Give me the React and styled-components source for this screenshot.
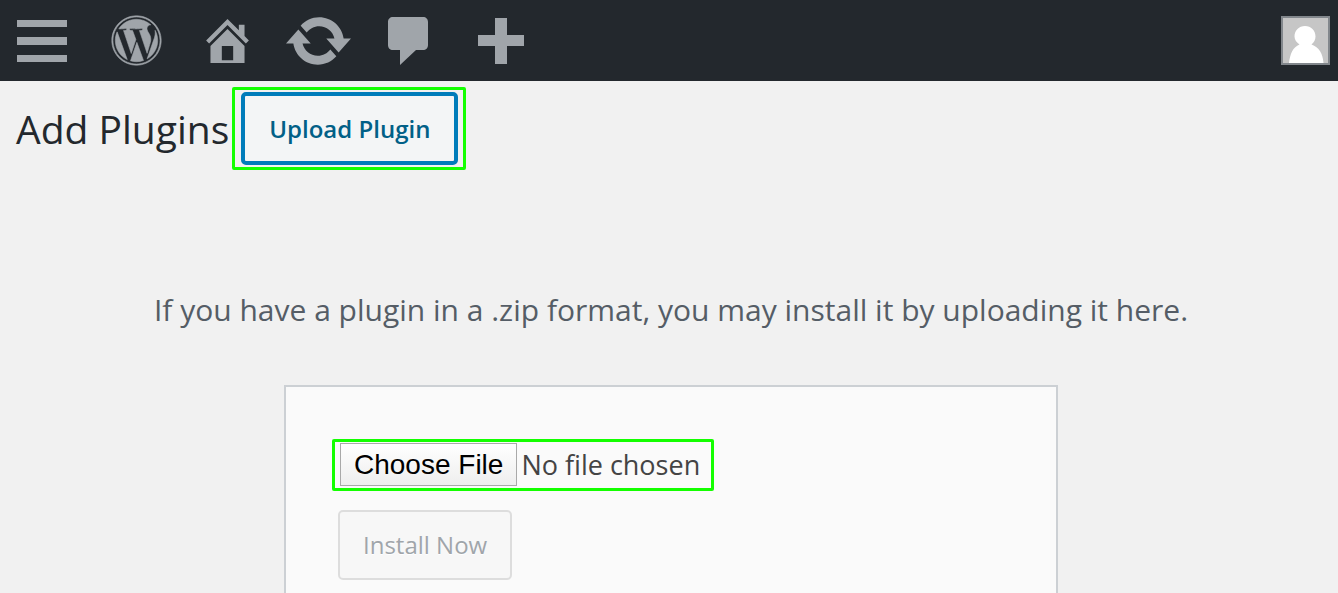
import React from 'react'
import styled, { createGlobalStyle } from 'styled-components'
import { FaWordpress } from 'react-icons/fa'

const FONT = '"Segoe UI", "Open Sans", "Noto Sans", sans-serif'
const ICON_COLOR = '#a0a5aa'

const GlobalStyle = createGlobalStyle`
	*, *::before, *::after {
		box-sizing: border-box;
	}

	html {
		scrollbar-width: none;
	}

	body {
		margin: 0;
		background: #f1f1f1;
		color: #444;
		font-family: ${FONT};
	}
`

const AdminBar = styled('header')`
	display: flex;
	align-items: center;
	height: 81px;
	padding: 0 8px 0 0;
	background: #23282d;
`

const MenuButton = styled('button')`
	display: flex;
	width: 91px;
	padding: 0 0 0 17px;
	border: 0;
	background: none;
	color: ${ICON_COLOR};
	cursor: pointer;
`

const BarLink = styled('a')`
	display: flex;
	justify-content: center;
	width: 91px;
	color: ${ICON_COLOR};
`

const Icon = styled('svg')`
	display: block;
	fill: currentColor;
`

const AccountLink = styled('a')`
	display: block;
	margin-left: auto;
	border: 2px solid #82878c;
	background: #c6c6c6;
`

const TitleRow = styled('div')`
	display: flex;
	align-items: center;
	gap: 3px;
	padding: 6px 16px 0;
`

const Title = styled('h1')`
	margin: 0;
	color: #23282d;
	font-size: 39px;
	font-weight: 400;
	line-height: 52px;
`

const Highlight = styled('div')`
	display: flex;
	width: fit-content;
	padding: ${({ $tight }) => ($tight ? '1px 5px' : '2px 5px 2px 6px')};
	border: 3px solid #14ff00;
	border-radius: 2px;
`

const Button = styled('button')`
	border-radius: 5px;
	font-family: ${FONT};
	font-size: 24px;
	line-height: 36px;
`

const UploadButton = styled(Button)`
	padding: 15px 24px 14px;
	border: 4px solid #007cba;
	background: #f3f5f6;
	color: #016087;
	font-weight: 600;
	cursor: pointer;
`

const InstallButton = styled(Button)`
	margin: 19px 0 0 6px;
	padding: 15px 23px;
	border: 2px solid #ddd;
	background: #f7f7f7;
	color: #a0a5aa;
	font-weight: 400;
	text-shadow: 0 1px 0 #fff;
`

const Upload = styled('section')`
	display: flex;
	flex-direction: column;
	align-items: center;
	padding: 116px 14px 60px 18px;
`

const Help = styled('p')`
	margin: 0;
	color: #555d66;
	font-size: 30px;
	line-height: 48px;
	text-align: center;
`

const UploadForm = styled('form')`
	width: 100%;
	max-width: 774px;
	margin-top: 51px;
	padding: 52px 46px;
	border: 2px solid #ccd0d4;
	background: #fafafa;
`

const FileInput = styled('input')`
	width: 366px;
	height: 44px;
	color: #444;
	font-family: ${FONT};
	font-size: 27px;
	line-height: 43px;

	&::file-selector-button {
		height: 43px;
		margin: 0 4px 0 0;
		padding: 0 13px;
		border: 1px solid #a9a9a9;
		border-radius: 0;
		background: linear-gradient(#fff, #eee);
		color: #000;
		font-family: "Liberation Sans", Arial, sans-serif;
		font-size: 28px;
		vertical-align: top;
	}
`

const BAR_LINKS = [
	{
		label: 'Visit Site',
		width: 43,
		height: 44,
		viewBox: '2.47 2.5 15.06 15.5',
		path: 'M16 8.5l1.53 1.53-1.06 1.06L10 4.6l-6.47 6.49-1.06-1.06L10 2.5l4 4v-2h2v4zm-6-2.46l6 5.99V18H4v-5.97zM12 17v-5H8v5h4z',
	},
	{
		label: 'Updates',
		width: 65,
		height: 48,
		viewBox: '.8 3.28 18.4 13.44',
		path: 'M10.2 3.28c3.53 0 6.43 2.61 6.92 6h2.08l-3.5 4-3.5-4h2.32c-.45-1.97-2.21-3.45-4.32-3.45-1.45 0-2.73.71-3.54 1.78L4.95 5.66C6.23 4.2 8.11 3.28 10.2 3.28zm-.4 13.44c-3.52 0-6.43-2.61-6.92-6H.8l3.5-4c1.17 1.33 2.33 2.67 3.5 4H5.48c.45 1.97 2.21 3.45 4.32 3.45 1.45 0 2.73-.71 3.54-1.78l1.71 1.95c-1.28 1.46-3.15 2.38-5.25 2.38z',
	},
	{
		label: 'Comments',
		width: 44,
		height: 48,
		viewBox: '0 0 44 48',
		path: 'M5 0h30c3 0 5 2 5 5v23c0 3-2 5-5 5h-7L12 48V33H5c-3 0-5-2-5-5V5c0-3 2-5 5-5z',
	},
	{
		label: 'New',
		width: 46,
		height: 46,
		viewBox: '0 0 46 46',
		path: 'M17 0h12v17h17v11H29v18H17V28H0V17h17z',
	},
]

export default function App() {
	return (
		<>
			<GlobalStyle />

			<AdminBar>
				<MenuButton type="button" aria-label="Menu">
					<Icon width="50" height="42" viewBox="0 0 50 42">
						<path d="M0 0h50v7H0zM0 17h50v8H0zM0 35h50v7H0z" />
					</Icon>
				</MenuButton>

				<BarLink href="#about" aria-label="About WordPress">
					<FaWordpress size={51} stroke="currentColor" strokeWidth={6} />
				</BarLink>

				{BAR_LINKS.map(({ label, width, height, viewBox, path }) => (
					<BarLink key={label} href="#" aria-label={label}>
						<Icon width={width} height={height} viewBox={viewBox}>
							<path d={path} />
						</Icon>
					</BarLink>
				))}

				<AccountLink href="#profile" aria-label="My account">
					<Icon width="45" height="45" viewBox="0 0 45 45">
						<path
							fill="#fff"
							d="M22 8c6 0 10.500 4.500 10.500 10.500 0 3-1.500 6-4 8C36 29 40 36 40.500 45H6c1-9 4-16 10.500-18.500-3-2-5-5-5-8C11.500 12.500 16 8 22 8z"
						/>
					</Icon>
				</AccountLink>
			</AdminBar>

			<main>
				<TitleRow>
					<Title>Add Plugins</Title>
					<Highlight>
						<UploadButton type="button">Upload Plugin</UploadButton>
					</Highlight>
				</TitleRow>

				<Upload>
					<Help>If you have a plugin in a .zip format, you may install it by uploading it here.</Help>

					<UploadForm>
						<Highlight $tight>
							<FileInput type="file" accept=".zip" aria-label="Plugin zip file" />
						</Highlight>
						<InstallButton type="submit" disabled>Install Now</InstallButton>
					</UploadForm>
				</Upload>
			</main>
		</>
	)
}
